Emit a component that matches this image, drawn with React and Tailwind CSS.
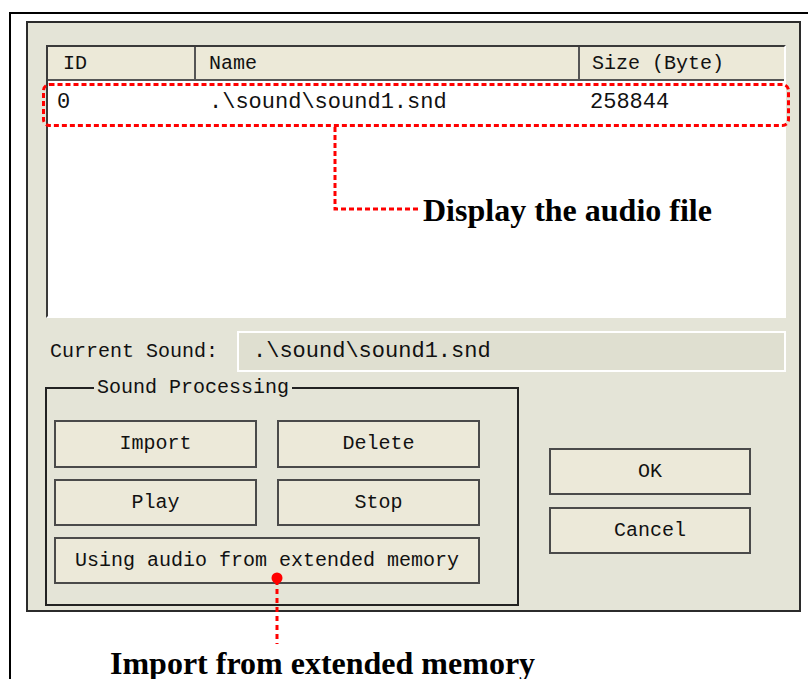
import React from 'react'

const uiFont = { fontFamily: '"Liberation Mono", "DejaVu Sans Mono", monospace' }
const noteFont = { fontFamily: '"Liberation Serif", "DejaVu Serif", serif' }

const DlgButton = ({ children, className = '' }) => (
  <button
    type="button"
    className={`flex items-center justify-center border-2 border-[#4a4a4a] bg-[#ece9d9] text-[20px] text-[#111] ${className}`}
  >
    {children}
  </button>
)

const Annotations = () => (
  <svg className="absolute left-0 top-0 pointer-events-none" width="808" height="679" viewBox="0 0 808 679">
    {/* highlighted row */}
    <rect x="43.5" y="84.5" width="745" height="41" rx="6" fill="none" stroke="#ff0000" strokeWidth="3" strokeDasharray="5 3" />
    {/* connector to "Display the audio file" */}
    <polyline points="335,127 335,209 421,209" fill="none" stroke="#ff0000" strokeWidth="3" strokeDasharray="5 3" />
    {/* connector to "Import from extended memory" */}
    <circle cx="277" cy="578" r="5.5" fill="#ff0000" />
    <line x1="277" y1="580" x2="277" y2="644" stroke="#ff0000" strokeWidth="3" strokeDasharray="5 4" />
  </svg>
)

export default function App() {
  return (
    <div className="relative w-[808px] h-[679px] overflow-hidden bg-white text-[#111]" style={uiFont}>
      {/* outer frame */}
      <div className="ml-[9px] mt-[12px] w-[830px] h-[700px] border-l-2 border-t-2 border-black pl-[15px] pt-[7px]">
        {/* dialog */}
        <div className="w-[775px] border-2 border-[#2b2b2b] bg-[#e4e4d7] pb-[4px]">
          {/* sound list */}
          <div className="ml-[18px] mt-[22px] w-[740px] h-[273px] border-2 border-l-[#3a3a3a] border-t-[#3a3a3a] border-r-white border-b-white bg-white">
            <div className="grid grid-cols-[148px_384px_1fr] h-[34px] bg-[#ece9d8] border-b-2 border-[#555] text-[20px]">
              <div className="flex items-center pl-[15px] pt-[2px] border-r-2 border-[#555]">ID</div>
              <div className="flex items-center pl-[13px] pt-[2px] border-r-2 border-[#555]">Name</div>
              <div className="flex items-center pl-[12px] pt-[2px]">Size (Byte)</div>
            </div>
            <div className="grid grid-cols-[148px_384px_1fr] h-[42px] text-[22px]">
              <div className="flex items-center pl-[9px]">0</div>
              <div className="flex items-center pl-[13px]">.\sound\sound1.snd</div>
              <div className="flex items-center pl-[10px]">258844</div>
            </div>
          </div>

          {/* current sound */}
          <div className="flex items-center mt-[13px] ml-[22px]">
            <div className="w-[187px] text-[20px]">Current Sound:</div>
            <div className="flex items-center w-[549px] h-[41px] border-2 border-white bg-[#dfdfd0] pl-[14px] text-[22px]">
              .\sound\sound1.snd
            </div>
          </div>

          {/* processing + dialog buttons */}
          <div className="flex items-start ml-[17px] mt-[4px]">
            <fieldset className="w-[474px] border-2 border-[#222] pl-[7px] pt-[20px] pb-[20px]">
              <legend className="ml-[40px] px-[3px] text-[20px] leading-[24px]">Sound Processing</legend>
              <div className="grid grid-cols-[203px_203px] gap-x-[20px] gap-y-[11px]">
                <DlgButton className="h-[48px]">Import</DlgButton>
                <DlgButton className="h-[48px]">Delete</DlgButton>
                <DlgButton className="h-[47px]">Play</DlgButton>
                <DlgButton className="h-[47px]">Stop</DlgButton>
                <DlgButton className="col-span-2 h-[47px]">Using audio from extended memory</DlgButton>
              </div>
            </fieldset>
            <div className="flex flex-col gap-[12px] ml-[30px] mt-[72px]">
              <DlgButton className="w-[202px] h-[47px]">OK</DlgButton>
              <DlgButton className="w-[202px] h-[47px]">Cancel</DlgButton>
            </div>
          </div>
        </div>

        <div className="ml-[84px] mt-[35px] text-[32px] leading-[32px] font-bold text-black" style={noteFont}>
          Import from extended memory
        </div>
      </div>

      <Annotations />
      <div className="absolute left-[423px] top-[192px] text-[32px] leading-[36px] font-bold text-black" style={noteFont}>
        Display the audio file
      </div>
    </div>
  )
}
